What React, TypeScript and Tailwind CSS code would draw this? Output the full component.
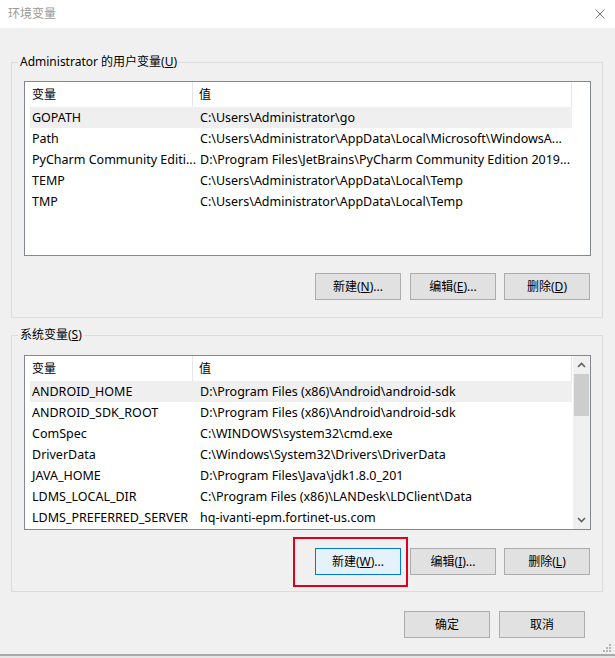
import type { ReactNode } from "react";

type EnvVar = { name: string; value: string };

const userVars: EnvVar[] = [
  { name: "GOPATH", value: "C:\\Users\\Administrator\\go" },
  { name: "Path", value: "C:\\Users\\Administrator\\AppData\\Local\\Microsoft\\WindowsA..." },
  { name: "PyCharm Community Editi...", value: "D:\\Program Files\\JetBrains\\PyCharm Community Edition 2019..." },
  { name: "TEMP", value: "C:\\Users\\Administrator\\AppData\\Local\\Temp" },
  { name: "TMP", value: "C:\\Users\\Administrator\\AppData\\Local\\Temp" },
];

const systemVars: EnvVar[] = [
  { name: "ANDROID_HOME", value: "D:\\Program Files (x86)\\Android\\android-sdk" },
  { name: "ANDROID_SDK_ROOT", value: "D:\\Program Files (x86)\\Android\\android-sdk" },
  { name: "ComSpec", value: "C:\\WINDOWS\\system32\\cmd.exe" },
  { name: "DriverData", value: "C:\\Windows\\System32\\Drivers\\DriverData" },
  { name: "JAVA_HOME", value: "D:\\Program Files\\Java\\jdk1.8.0_201" },
  { name: "LDMS_LOCAL_DIR", value: "C:\\Program Files (x86)\\LANDesk\\LDClient\\Data" },
  { name: "LDMS_PREFERRED_SERVER", value: "hq-ivanti-epm.fortinet-us.com" },
];

function WinButton({ children, focused = false }: { children: ReactNode; focused?: boolean }) {
  return (
    <button
      type="button"
      className={
        focused
          ? "flex h-[27px] w-[86px] items-center justify-center border border-[#0078d7] bg-[#e5f1fb] text-[12px] text-black"
          : "flex h-[27px] w-[86px] items-center justify-center border border-[#adadad] bg-[#e1e1e1] text-[12px] text-black"
      }
    >
      {children}
    </button>
  );
}

function VarList({ rows, scroll = false }: { rows: EnvVar[]; scroll?: boolean }) {
  return (
    <div className="flex h-[175px] w-[567px] border border-[#828790] bg-white">
      <div className="flex w-[548px] flex-col overflow-hidden">
        <div className="flex h-[25px] shrink-0 items-center">
          <div className="flex h-full w-[168px] items-center border-r border-[#e5e5e5] pl-[7px]">变量</div>
          <div className="flex h-full w-[379px] items-center border-r border-[#e5e5e5] pl-[6px]">值</div>
        </div>
        {rows.map((row, index) => (
          <div
            key={row.name}
            className={
              index === 0
                ? "ml-[5px] flex h-[21px] w-[542px] shrink-0 items-center whitespace-nowrap bg-[#efefef] pt-[1px] text-[12.5px]"
                : "ml-[5px] flex h-[21px] w-[542px] shrink-0 items-center whitespace-nowrap pt-[1px] text-[12.5px]"
            }
          >
            <span className="w-[170px] shrink-0 pl-[2px]">{row.name}</span>
            <span className="overflow-hidden">{row.value}</span>
          </div>
        ))}
      </div>
      {scroll ? (
        <div className="flex w-[17px] flex-col bg-[#f0f0f0]">
          <div className="flex h-[18px] items-center justify-center">
            <svg width="9" height="6" viewBox="0 0 9 6">
              <path d="M1 5 L4.5 1.5 L8 5" fill="none" stroke="#606060" strokeWidth="1.6" />
            </svg>
          </div>
          <div className="mx-[1px] h-[42px] bg-[#cdcdcd]" />
          <div className="flex-1" />
          <div className="flex h-[18px] items-center justify-center">
            <svg width="9" height="6" viewBox="0 0 9 6">
              <path d="M1 1 L4.5 4.5 L8 1" fill="none" stroke="#606060" strokeWidth="1.6" />
            </svg>
          </div>
        </div>
      ) : null}
    </div>
  );
}

function GroupBox({ label, children, className }: { label: ReactNode; children: ReactNode; className: string }) {
  return (
    <div className={`relative ml-[11px] w-[592px] border border-[#dcdcdc] ${className}`}>
      <span className="absolute -top-[9px] left-[6px] bg-[#f0f0f0] px-[2px] leading-[16px]">{label}</span>
      {children}
    </div>
  );
}

export default function App() {
  return (
    <div className="relative h-[658px] w-[615px] overflow-hidden bg-[#f0f0f0] font-['Noto_Sans','Noto_Sans_CJK_SC',sans-serif] text-[12px] text-black">
      <div className="flex h-[28px] items-center justify-between bg-white pl-[8px] pr-[10px]">
        <span className="text-[12px] text-[#999999]">环境变量</span>
        <svg width="10" height="10" viewBox="0 0 10 10">
          <path d="M0.5 0.5 L9.5 9.5 M9.5 0.5 L0.5 9.5" stroke="#7a7a7a" strokeWidth="1" />
        </svg>
      </div>

      <GroupBox
        className="mt-[34px] h-[256px] pl-[12px] pt-[18px]"
        label={
          <>
            Administrator 的用户变量(<u>U</u>)
          </>
        }
      >
        <VarList rows={userVars} />
        <div className="mt-[17px] flex gap-[9px] pl-[291px]">
          <WinButton>
            新建(<u>N</u>)...
          </WinButton>
          <WinButton>
            编辑(<u>E</u>)...
          </WinButton>
          <div className="-ml-[1px]">
            <WinButton>
              删除(<u>D</u>)
            </WinButton>
          </div>
        </div>
      </GroupBox>

      <GroupBox
        className="mt-[17px] h-[257px] pl-[12px] pt-[19px]"
        label={
          <>
            系统变量(<u>S</u>)
          </>
        }
      >
        <VarList rows={systemVars} scroll />
        <div className="mt-[18px] flex gap-[9px] pl-[291px]">
          <div className="relative">
            <WinButton focused>
              新建(<u>W</u>)...
            </WinButton>
            <div className="pointer-events-none absolute -bottom-[12px] -left-[22px] -right-[7px] -top-[11px] border-2 border-[#e0001b]" />
          </div>
          <WinButton>
            编辑(<u>I</u>)...
          </WinButton>
          <div className="-ml-[1px]">
            <WinButton>
              删除(<u>L</u>)
            </WinButton>
          </div>
        </div>
      </GroupBox>

      <div className="mt-[19px] flex gap-[9px] pl-[404px]">
        <WinButton>确定</WinButton>
        <WinButton>取消</WinButton>
      </div>

      <div className="absolute bottom-[5px] right-[3px]">
        <svg width="9" height="9" viewBox="0 0 9 9">
          <rect x="6" y="0" width="2" height="2" fill="#b4b4b4" />
          <rect x="3" y="3" width="2" height="2" fill="#b4b4b4" />
          <rect x="6" y="3" width="2" height="2" fill="#b4b4b4" />
          <rect x="0" y="6" width="2" height="2" fill="#b4b4b4" />
          <rect x="3" y="6" width="2" height="2" fill="#b4b4b4" />
          <rect x="6" y="6" width="2" height="2" fill="#b4b4b4" />
        </svg>
      </div>
      <div className="absolute bottom-0 left-0 h-[4px] w-full border-t-2 border-[#a9a9a9] bg-[#e6e6e6]" />
    </div>
  );
}
